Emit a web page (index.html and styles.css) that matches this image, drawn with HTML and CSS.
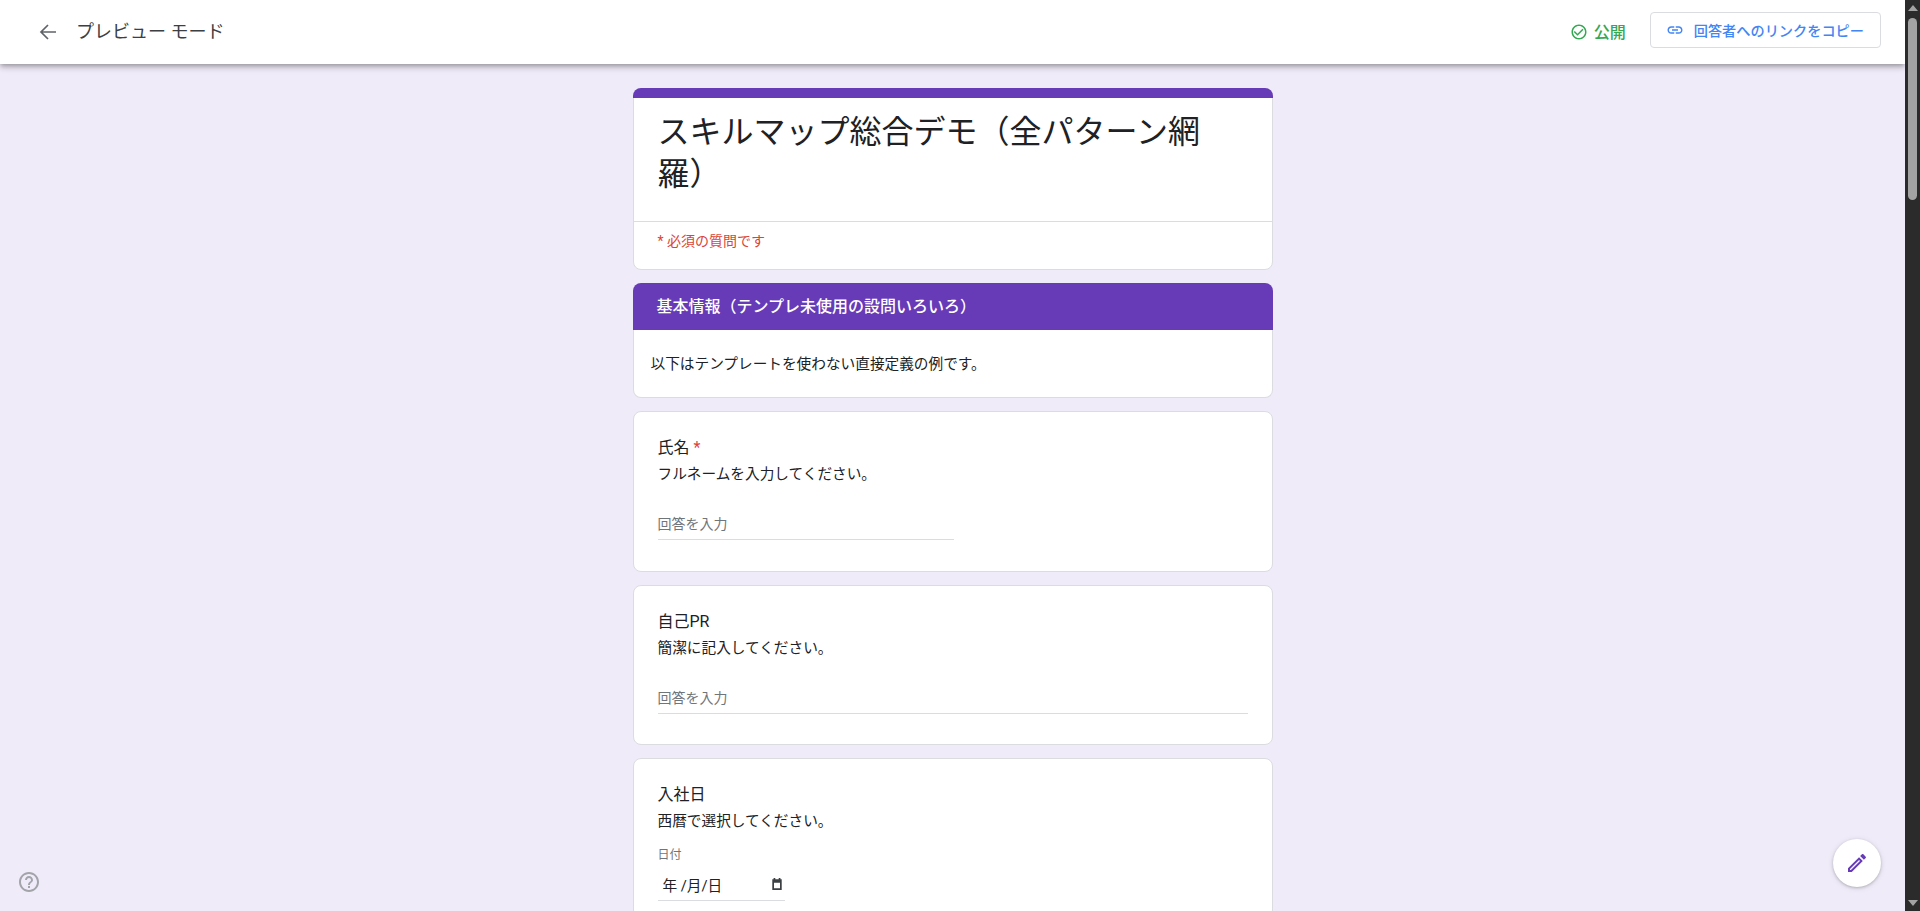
FILE: index.html
```html
<!DOCTYPE html>
<html lang="ja">
<head>
  <meta charset="UTF-8" />
  <title>スキルマップ総合デモ(全パターン網羅)</title>
  <link rel="stylesheet" href="styles.css">
</head>
<body>
  <div class="window">
    <div class="viewport">
      <header class="topbar">
        <div class="topbar-left">
          <svg class="back-icon" viewBox="0 0 24 24"><path d="M20 12H5.5M12 5l-7 7 7 7"/></svg>
          <span class="mode-label">プレビュー モード</span>
        </div>
        <div class="topbar-right">
          <div class="published">
            <svg class="published-icon" viewBox="0 0 24 24"><path d="M16.59 7.58L10 14.17l-3.59-3.58L5 12l5 5 8-8zM12 2C6.48 2 2 6.48 2 12s4.48 10 10 10 10-4.48 10-10S17.52 2 12 2zm0 18c-4.42 0-8-3.58-8-8s3.58-8 8-8 8 3.58 8 8-3.58 8-8 8z"/></svg>
            <span class="published-text">公開</span>
          </div>
          <div class="copy-link">
            <svg class="link-icon" viewBox="0 0 24 24"><path d="M3.9 12c0-1.71 1.39-3.1 3.1-3.1h4V7H7c-2.76 0-5 2.24-5 5s2.24 5 5 5h4v-1.9H7c-1.71 0-3.1-1.39-3.1-3.1zM8 13h8v-2H8v2zm9-6h-4v1.9h4c1.71 0 3.1 1.39 3.1 3.1s-1.39 3.1-3.1 3.1h-4V17h4c2.76 0 5-2.24 5-5s-2.24-5-5-5z"/></svg>
            <span>回答者へのリンクをコピー</span>
          </div>
        </div>
      </header>

      <main class="form">
        <section class="card title-card">
          <div class="title-band"></div>
          <h1 class="form-title">スキルマップ総合デモ（全パターン網羅）</h1>
          <div class="required-note">* 必須の質問です</div>
        </section>

        <section class="section-card">
          <h2 class="section-head">基本情報（テンプレ未使用の設問いろいろ）</h2>
          <p class="section-desc">以下はテンプレートを使わない直接定義の例です。</p>
        </section>

        <section class="card question question-tall">
          <div class="q-title">氏名 <span class="star">*</span></div>
          <div class="q-desc">フルネームを入力してください。</div>
          <div class="answer answer-short">回答を入力</div>
        </section>

        <section class="card question">
          <div class="q-title">自己PR</div>
          <div class="q-desc">簡潔に記入してください。</div>
          <div class="answer">回答を入力</div>
        </section>

        <section class="card question">
          <div class="q-title">入社日</div>
          <div class="q-desc">西暦で選択してください。</div>
          <div class="date-label">日付</div>
          <div class="date-field">
            <span>年 /月/日</span>
            <svg class="calendar-icon" viewBox="0 0 14 14"><path d="M3 0h2v1.5h4V0h2v1.5h1.5V14h-11V1.5H3zM3.5 5.5v6.5h7V5.5z"/></svg>
          </div>
        </section>
      </main>

      <svg class="help-icon" viewBox="0 0 24 24"><path d="M11 18h2v-2h-2v2zm1-16C6.48 2 2 6.48 2 12s4.48 10 10 10 10-4.48 10-10S17.52 2 12 2zm0 18c-4.41 0-8-3.59-8-8s3.59-8 8-8 8 3.59 8 8-3.59 8-8 8zm0-14c-2.21 0-4 1.79-4 4h2c0-1.1.9-2 2-2s2 .9 2 2c0 2-3 1.75-3 5h2c0-2.25 3-2.5 3-5 0-2.21-1.79-4-4-4z"/></svg>
      <div class="edit-fab">
        <svg class="edit-icon" viewBox="0 0 24 24"><path d="M3 17.25V21h3.75L17.81 9.94l-3.75-3.75L3 17.25zM5.92 19H5v-.92l9.06-9.06.92.92L5.92 19zM20.71 7.04c.39-.39.39-1.02 0-1.41l-2.34-2.34c-.2-.2-.45-.29-.71-.29s-.51.1-.7.29l-1.83 1.83 3.75 3.75 1.83-1.83z"/></svg>
      </div>
    </div>

    <div class="scrollbar">
      <div class="arrow-up"></div>
      <div class="thumb"></div>
      <div class="arrow-down"></div>
    </div>
  </div>
</body>
</html>
```

FILE: styles.css
```css
* {
  box-sizing: border-box;
}

html,
body {
  height: 100%;
  margin: 0;
  overflow: hidden;
}

body {
  font-family: Roboto, "Noto Sans CJK JP", sans-serif;
  color: #202124;
  background: #f0ebf8;
}

.window {
  display: flex;
  height: 100%;
}

.viewport {
  flex: 1;
  min-width: 0;
  position: relative;
  display: flex;
  flex-direction: column;
  overflow: hidden;
}

/* top bar */
.topbar {
  flex: none;
  height: 64px;
  padding: 0 24px 0 36px;
  display: flex;
  align-items: center;
  justify-content: space-between;
  background: #fff;
  box-shadow: 0 2px 4px -1px rgba(0, 0, 0, 0.2), 0 4px 5px 0 rgba(0, 0, 0, 0.14), 0 1px 10px 0 rgba(0, 0, 0, 0.12);
  position: relative;
  z-index: 2;
}

.topbar-left {
  display: flex;
  align-items: center;
  gap: 16px;
}

.back-icon {
  width: 24px;
  height: 24px;
  fill: none;
  stroke: #5f6368;
  stroke-width: 1.7;
}

.mode-label {
  font-size: 18px;
  line-height: 24px;
  margin-bottom: 1px;
  color: #3c4043;
}

.topbar-right {
  display: flex;
  align-items: center;
  gap: 24px;
}

.published {
  display: flex;
  align-items: center;
  gap: 6px;
  font-size: 16px;
  font-weight: 500;
  color: #34a853;
}

.published-text {
  margin-bottom: 2px;
}

.published-icon {
  width: 18px;
  height: 18px;
  fill: #34a853;
}

.copy-link {
  height: 36px;
  margin-bottom: 4px;
  padding: 0 16px 0 15px;
  display: flex;
  align-items: center;
  gap: 10px;
  border: 1px solid #dadce0;
  border-radius: 4px;
  font-size: 14.2px;
  font-weight: 500;
  color: #4285f4;
}

.link-icon {
  width: 18px;
  height: 18px;
  fill: #4285f4;
}

/* form column */
.form {
  width: 640px;
  margin: 24px auto 0;
  display: flex;
  flex-direction: column;
  gap: 13px;
  flex: none;
}

.card {
  background: #fff;
  border: 1px solid #dadce0;
  border-radius: 8px;
}

.title-card {
  position: relative;
  height: 182px;
  overflow: visible;
}

.title-band {
  height: 10px;
  margin: -1px -1px 0;
  background: #673ab7;
  border-radius: 8px 8px 0 0;
}

.form-title {
  margin: 0;
  height: 124px;
  padding: 13px 60px 0 24px;
  font-size: 32px;
  font-weight: 400;
  line-height: 42px;
  border-bottom: 1px solid #dadce0;
  color: #202124;
}

.required-note {
  padding: 9px 24px;
  font-size: 14px;
  line-height: 20px;
  color: #db4437;
}

.section-card {
  display: flex;
  flex-direction: column;
}

.section-head {
  margin: 0;
  height: 47px;
  padding: 0 24px 3px;
  display: flex;
  align-items: center;
  font-size: 16px;
  font-weight: 500;
  color: #fff;
  background: #673ab7;
  border-radius: 8px 8px 0 0;
}

.section-desc {
  margin: 0;
  height: 68px;
  padding: 24px 17px 0;
  font-size: 14.67px;
  line-height: 20px;
  background: #fff;
  border: 1px solid #dadce0;
  border-top: none;
  border-radius: 0 0 8px 8px;
}

.question {
  padding: 24px 24px 0;
  height: 160px;
}

.question-tall {
  height: 161px;
}

.q-title {
  font-size: 16px;
  line-height: 24px;
}

.star {
  color: #db4437;
}

.q-desc {
  margin-top: 4px;
  font-size: 14.67px;
  line-height: 20px;
}

.answer {
  margin-top: 30px;
  height: 26px;
  font-size: 14px;
  line-height: 20px;
  color: #70757a;
  border-bottom: 1px solid #dadce0;
}

.answer-short {
  width: 296px;
}

.date-label {
  margin-top: 16px;
  font-size: 12px;
  line-height: 16px;
  color: #70757a;
}

.date-field {
  width: 127px;
  height: 33px;
  margin-top: 5px;
  padding: 0 2px 0 5px;
  display: flex;
  align-items: center;
  justify-content: space-between;
  font-size: 14.67px;
  border-bottom: 1px solid #dadce0;
}

.calendar-icon {
  width: 12px;
  height: 12px;
  fill: #3c4043;
}

/* floating bits */
.help-icon {
  position: absolute;
  left: 17px;
  bottom: 17px;
  width: 24px;
  height: 24px;
  fill: #a2a4aa;
}

.edit-fab {
  position: absolute;
  right: 24px;
  bottom: 24px;
  width: 48px;
  height: 48px;
  display: flex;
  align-items: center;
  justify-content: center;
  background: #fff;
  border-radius: 50%;
  box-shadow: 0 1px 3px rgba(60, 64, 67, 0.3), 0 1px 6px rgba(60, 64, 67, 0.1);
}

.edit-icon {
  width: 24px;
  height: 24px;
  fill: #673ab7;
}

/* scrollbar */
.scrollbar {
  flex: none;
  width: 15px;
  display: flex;
  flex-direction: column;
  align-items: center;
  background: #2b2b2b;
  position: relative;
  z-index: 3;
}

.arrow-up,
.arrow-down {
  flex: none;
  width: 0;
  height: 0;
  border-left: 5px solid transparent;
  border-right: 5px solid transparent;
}

.arrow-up {
  margin-top: 5px;
  border-bottom: 6px solid #a3a3a3;
}

.thumb {
  width: 9px;
  height: 182px;
  margin-top: 7px;
  background: #a3a3a3;
  border-radius: 5px;
}

.arrow-down {
  margin-top: auto;
  margin-bottom: 5px;
  border-top: 6px solid #a3a3a3;
}
```
